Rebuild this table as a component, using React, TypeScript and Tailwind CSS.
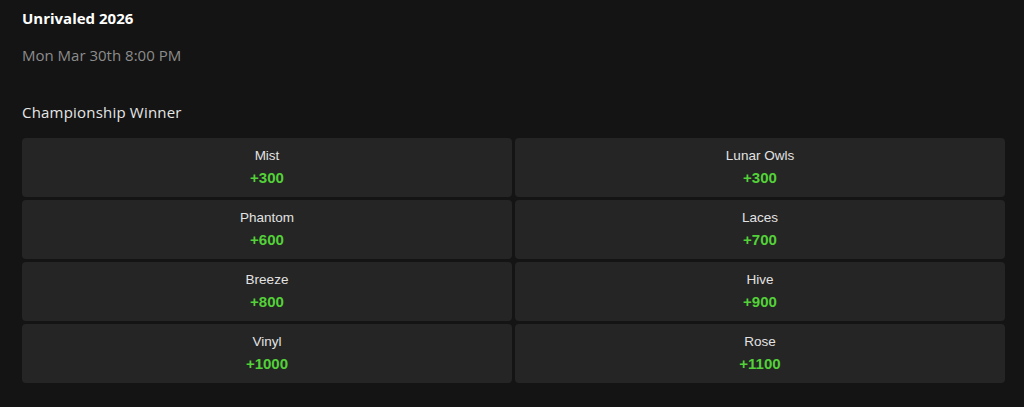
const OUTCOMES = [
  { name: 'Mist', odds: '+300' },
  { name: 'Lunar Owls', odds: '+300' },
  { name: 'Phantom', odds: '+600' },
  { name: 'Laces', odds: '+700' },
  { name: 'Breeze', odds: '+800' },
  { name: 'Hive', odds: '+900' },
  { name: 'Vinyl', odds: '+1000' },
  { name: 'Rose', odds: '+1100' },
];

export default function App() {
  return (
    <div className="min-h-[407px] bg-[#141414] pl-[22px] pr-[19px] pt-[8px] font-['Open_Sans',sans-serif]">
      <h1 className="text-[15px] leading-[20px] font-bold text-white">Unrivaled 2026</h1>
      <p className="mt-[17px] text-[15px] leading-[20px] text-[#8c8c8c]">Mon Mar 30th 8:00 PM</p>
      <h2 className="mt-[37px] text-[15px] leading-[20px] text-[#e6e6e6] tracking-[0.2px]">Championship Winner</h2>
      <div className="mt-[16px] grid grid-cols-2 gap-[3px] font-['Liberation_Sans',Arial,sans-serif]">
        {OUTCOMES.map((o) => (
          <button
            key={o.name}
            className="flex h-[59px] flex-col items-center rounded-[4px] bg-[#252525] pt-[9px]"
          >
            <span className="text-[13.5px] leading-[17px] text-[#e2e2e2]">{o.name}</span>
            <span className="mt-[4px] text-[15px] leading-[19px] font-bold text-[#53d138]">{o.odds}</span>
          </button>
        ))}
      </div>
    </div>
  );
}
